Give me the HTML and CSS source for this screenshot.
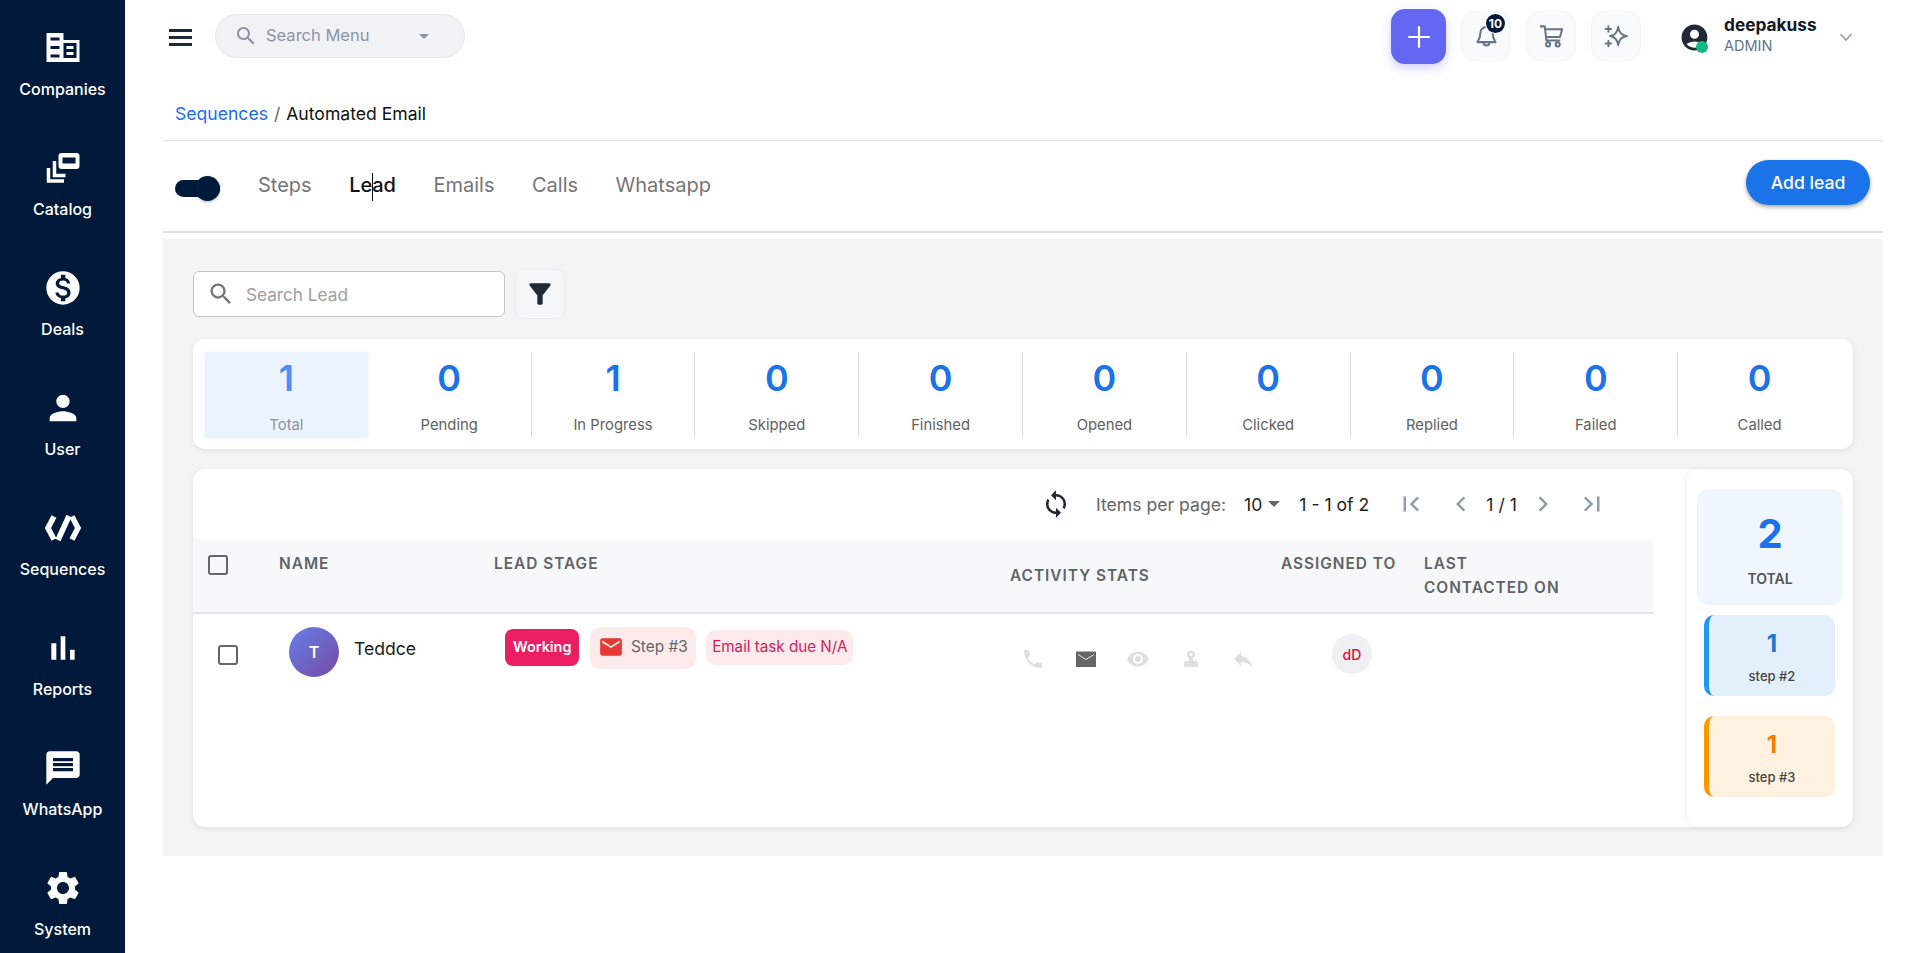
FILE: index.html
```html
<!DOCTYPE html>
<html lang="en">
<head>
    <meta charset="UTF-8">
    <meta name="viewport" content="width=device-width, initial-scale=1.0">
    <title>Automated Email</title>
    <link rel="stylesheet" href="styles.css">
</head>
<body>
    <!-- left menu -->
    <nav class="sidebar">
        <a class="side-item">
            <svg class="side-icon" viewBox="0 0 40 40"><path fill="#fff" d="M3.500 5h17v7h16v22h-33z"/><path fill="#01193a" d="M7.500 9.500h9v3h-9zM7.500 18h9v3h-9zM7.500 26.500h9v3h-9zM20.500 15h13v15h-13z"/><path fill="#fff" d="M23.500 18h7v3h-7zM23.500 24h7v3h-7z"/></svg>
            <span>Companies</span>
        </a>
        <a class="side-item">
            <svg class="side-icon" viewBox="0 0 40 40"><path fill="none" stroke="#fff" stroke-width="3.500" d="M5.500 20v13h15.500"/><path fill="none" stroke="#fff" stroke-width="3.500" d="M11.500 13v14.500h11"/><rect x="15.500" y="5" width="21" height="16" rx="3" fill="#fff"/><rect x="19.500" y="9.500" width="13" height="6" fill="#01193a"/></svg>
            <span>Catalog</span>
        </a>
        <a class="side-item">
            <svg class="side-icon" viewBox="0 0 24 24"><path fill="#fff" d="M12 2C6.480 2 2 6.480 2 12s4.480 10 10 10 10-4.480 10-10S17.520 2 12 2zm1.410 16.090V20h-2.670v-1.930c-1.710-.360-3.160-1.460-3.270-3.400h1.960c.100 1.050.820 1.870 2.650 1.870 1.960 0 2.400-.980 2.400-1.590 0-.830-.440-1.610-2.670-2.140-2.480-.600-4.180-1.620-4.180-3.670 0-1.720 1.390-2.840 3.110-3.210V4h2.670v1.950c1.860.450 2.790 1.860 2.850 3.390H14.300c-.050-1.110-.640-1.870-2.220-1.870-1.500 0-2.400.680-2.400 1.640 0 .840.650 1.390 2.670 1.910s4.180 1.390 4.180 3.910c-.010 1.830-1.380 2.830-3.120 3.160z"/></svg>
            <span>Deals</span>
        </a>
        <a class="side-item">
            <svg class="side-icon" viewBox="0 0 24 24"><path fill="#fff" d="M12 12c2.210 0 4-1.790 4-4s-1.790-4-4-4-4 1.790-4 4 1.790 4 4 4zm0 2c-2.670 0-8 1.340-8 4v2h16v-2c0-2.660-5.330-4-8-4z"/></svg>
            <span>User</span>
        </a>
        <a class="side-item">
            <svg class="side-icon" viewBox="0 0 40 40"><path fill="none" stroke="#fff" stroke-width="5.500" d="M11 8.500 5 20l6 11.500M29 8.500 35 20l-6 11.500M26 8 15 32"/></svg>
            <span>Sequences</span>
        </a>
        <a class="side-item">
            <svg class="side-icon" viewBox="0 0 24 24"><path fill="#fff" d="M5 9.200h3V19H5zM10.600 5h2.800v14h-2.800zm5.600 8H19v6h-2.800z"/></svg>
            <span>Reports</span>
        </a>
        <a class="side-item">
            <svg class="side-icon" viewBox="0 0 24 24"><path fill="#fff" d="M20 2H4c-1.100 0-1.990.900-1.990 2L2 22l4-4h14c1.100 0 2-.900 2-2V4c0-1.100-.900-2-2-2zm-2 12H6v-2h12v2zm0-3H6V9h12v2zm0-3H6V6h12v2z"/></svg>
            <span>WhatsApp</span>
        </a>
        <a class="side-item">
            <svg class="side-icon" viewBox="0 0 24 24"><path fill="#fff" d="M19.140 12.940c.040-.300.060-.610.060-.940 0-.320-.020-.640-.070-.940l2.030-1.580c.180-.140.230-.410.120-.610l-1.920-3.320c-.120-.220-.370-.290-.590-.220l-2.390.960c-.500-.380-1.030-.700-1.620-.940l-.360-2.540c-.040-.240-.240-.410-.480-.410h-3.840c-.240 0-.430.170-.470.410l-.360 2.540c-.590.240-1.130.570-1.620.940l-2.390-.960c-.220-.080-.470 0-.590.220L2.740 8.870c-.120.210-.080.470.120.610l2.030 1.580c-.050.300-.090.630-.090.940s.020.640.070.940l-2.030 1.580c-.180.140-.230.410-.12.610l1.920 3.320c.120.220.370.290.590.220l2.390-.960c.500.380 1.030.700 1.620.940l.360 2.540c.050.240.240.410.480.410h3.840c.240 0 .440-.170.470-.410l.360-2.540c.590-.240 1.130-.560 1.620-.940l2.390.960c.220.080.470 0 .590-.220l1.920-3.320c.120-.220.070-.470-.120-.610l-2.010-1.580zM12 15.600c-1.980 0-3.600-1.620-3.600-3.600s1.620-3.600 3.600-3.600 3.600 1.620 3.600 3.600-1.620 3.600-3.600 3.600z"/></svg>
            <span>System</span>
        </a>
    </nav>

    <main class="main">
        <!-- top bar -->
        <header class="topbar">
            <div class="menu-lines"><i></i><i></i><i></i></div>
            <div class="menu-search">
                <svg class="menu-search-icon" viewBox="0 0 24 24"><path fill="#8a94a6" d="M15.500 14h-.790l-.280-.270C15.410 12.590 16 11.110 16 9.500 16 5.910 13.090 3 9.500 3S3 5.910 3 9.500 5.910 16 9.500 16c1.610 0 3.090-.590 4.230-1.570l.270.280v.790l5 4.990L20.490 19l-4.990-5zm-6 0C7.010 14 5 11.990 5 9.500S7.010 5 9.500 5 14 7.010 14 9.500 11.990 14 9.500 14z"/></svg>
                <span class="menu-search-text">Search Menu</span>
                <span class="menu-search-caret"></span>
            </div>
            <div class="top-actions">
                <button class="plus-btn">
                    <svg width="26" height="26" viewBox="0 0 26 26"><path stroke="#fff" stroke-width="2.200" stroke-linecap="round" d="M13 3v20M3 13h20"/></svg>
                </button>
                <div class="top-icon">
                    <svg width="27" height="27" viewBox="0 0 24 24" class="line-icon"><path d="M6.500 9a5.500 5.500 0 0 1 11 0c0 5 2.500 7.500 2.500 8H4c0-.500 2.500-3 2.500-8"/><path d="M9.500 17.500a2.500 2.500 0 0 0 5 0"/></svg>
                    <span class="bell-badge">10</span>
                </div>
                <div class="top-icon">
                    <svg width="27" height="27" viewBox="0 0 24 24" class="line-icon"><path d="M2.500 3H6l1.500 12.500H19"/><path d="M6.300 5.500H21.500L19.500 12.500H7.200"/><circle cx="9" cy="19" r="1.800"/><circle cx="17.500" cy="19" r="1.800"/></svg>
                </div>
                <div class="top-icon">
                    <svg width="26" height="26" viewBox="0 0 24 24" class="line-icon"><path d="M14 3.500Q15 11 22 12 15 13 14 20.500 13 13 6.500 12 13 11 14 3.500z"/><path d="M5 3v5M2.500 5.500h5M5 16.500v5M2.500 19h5"/></svg>
                </div>
                <div class="user-box">
                    <div class="user-avatar">
                        <svg width="31" height="31" viewBox="0 0 24 24"><path fill="#1f2937" d="M12 2C6.480 2 2 6.480 2 12s4.480 10 10 10 10-4.480 10-10S17.520 2 12 2zm0 4c1.930 0 3.500 1.570 3.500 3.500S13.930 13 12 13s-3.500-1.570-3.500-3.500S10.070 6 12 6zm0 14c-2.030 0-4.430-.820-6.140-2.880C7.550 15.800 9.680 15 12 15s4.450.800 6.140 2.120C16.430 19.180 14.030 20 12 20z"/></svg>
                        <span class="user-dot"></span>
                    </div>
                    <div class="user-text">
                        <div class="user-name">deepakuss</div>
                        <div class="user-role">ADMIN</div>
                    </div>
                    <svg class="user-chevron" width="16" height="16" viewBox="0 0 16 16"><path fill="none" stroke="#94a3b8" stroke-width="1.800" d="M2.500 5l5.500 6 5.500-6"/></svg>
                </div>
            </div>
        </header>

        <div class="breadcrumb">
            <a class="crumb-link">Sequences</a>
            <span class="crumb-sep">/</span>
            <span>Automated Email</span>
        </div>

        <!-- tabs -->
        <div class="tabbar">
            <div class="toggle"><span class="toggle-knob"></span></div>
            <div class="tabs">
                <span class="tab">Steps</span>
                <span class="tab active">Le<span class="text-caret"></span>ad</span>
                <span class="tab">Emails</span>
                <span class="tab">Calls</span>
                <span class="tab">Whatsapp</span>
            </div>
            <button class="add-lead">Add lead</button>
        </div>

        <section class="panel">
            <div class="search-row">
                <div class="lead-search">
                    <svg width="28" height="28" viewBox="0 0 24 24"><path fill="#757575" d="M15.500 14h-.790l-.280-.270C15.410 12.590 16 11.110 16 9.500 16 5.910 13.090 3 9.500 3S3 5.910 3 9.500 5.910 16 9.500 16c1.610 0 3.090-.590 4.230-1.570l.270.280v.790l5 4.990L20.490 19l-4.990-5zm-6 0C7.010 14 5 11.990 5 9.500S7.010 5 9.500 5 14 7.010 14 9.500 11.990 14 9.500 14z"/></svg>
                    <span>Search Lead</span>
                </div>
                <button class="filter-btn">
                    <svg width="32" height="32" viewBox="0 0 24 24"><path fill="#1f2937" d="M4.250 5.610C6.270 8.200 10 13 10 13v6c0 .550.450 1 1 1h2c.550 0 1-.450 1-1v-6s3.720-4.800 5.740-7.390C20.250 4.950 19.780 4 18.950 4H5.040c-.830 0-1.300.950-.790 1.610z"/></svg>
                </button>
            </div>

            <div class="stats">
                <div class="stat selected"><b>1</b><span>Total</span></div>
                <div class="stat"><b>0</b><span>Pending</span></div>
                <div class="stat"><b>1</b><span>In Progress</span></div>
                <div class="stat"><b>0</b><span>Skipped</span></div>
                <div class="stat"><b>0</b><span>Finished</span></div>
                <div class="stat"><b>0</b><span>Opened</span></div>
                <div class="stat"><b>0</b><span>Clicked</span></div>
                <div class="stat"><b>0</b><span>Replied</span></div>
                <div class="stat"><b>0</b><span>Failed</span></div>
                <div class="stat"><b>0</b><span>Called</span></div>
            </div>

            <div class="table-card">
                <div class="table-side">
                    <div class="pager">
                        <svg class="pager-refresh" width="30" height="30" viewBox="0 0 24 24"><path fill="#1f2937" d="M12 4V1L8 5l4 4V6c3.310 0 6 2.690 6 6 0 1.010-.250 1.970-.700 2.800l1.460 1.460C19.540 15.030 20 13.570 20 12c0-4.420-3.580-8-8-8zm0 14c-3.310 0-6-2.690-6-6 0-1.010.250-1.970.700-2.800L5.240 7.740C4.460 8.970 4 10.430 4 12c0 4.420 3.580 8 8 8v3l4-4-4-4v3z"/></svg>
                        <span class="pager-label">Items per page:</span>
                        <span class="pager-size">10</span>
                        <span class="pager-caret"></span>
                        <span class="pager-range">1 - 1 of 2</span>
                        <svg class="pager-first" width="30" height="30" viewBox="0 0 24 24"><path d="M18.410 16.590L13.820 12l4.590-4.590L17 6l-6 6 6 6zM6 6h2v12H6z"/></svg>
                        <svg class="pager-prev" width="30" height="30" viewBox="0 0 24 24"><path d="M15.410 7.410L14 6l-6 6 6 6 1.410-1.410L10.830 12z"/></svg>
                        <span class="pager-page">1 / 1</span>
                        <svg class="pager-next" width="30" height="30" viewBox="0 0 24 24"><path d="M10 6L8.590 7.410 13.170 12l-4.580 4.590L10 18l6-6z"/></svg>
                        <svg class="pager-last" width="30" height="30" viewBox="0 0 24 24"><path d="M5.590 7.410L10.180 12l-4.590 4.590L7 18l6-6-6-6zM16 6h2v12h-2z"/></svg>
                    </div>

                    <div class="grid-row table-head">
                        <div><span class="check head-check"></span></div>
                        <div>NAME</div>
                        <div>LEAD STAGE</div>
                        <div class="head-mid">ACTIVITY STATS</div>
                        <div>ASSIGNED TO</div>
                        <div>LAST<br>CONTACTED ON</div>
                    </div>

                    <div class="grid-row table-row">
                        <div><span class="check row-check"></span></div>
                        <div class="lead-name">
                            <span class="lead-avatar">T</span>
                            <span class="lead-text">Teddce</span>
                        </div>
                        <div class="chips">
                            <span class="chip chip-stage">Working</span>
                            <span class="chip chip-step">
                                <svg width="26" height="26" viewBox="0 0 24 24"><path fill="#e53935" d="M20 4H4c-1.100 0-1.990.900-1.990 2L2 18c0 1.100.900 2 2 2h16c1.100 0 2-.900 2-2V6c0-1.100-.900-2-2-2zm0 4l-8 5-8-5V6l8 5 8-5v2z"/></svg>
                                Step #3
                            </span>
                            <span class="chip chip-due">Email task due N/A</span>
                        </div>
                        <div class="activity">
                            <svg width="24" height="24" viewBox="0 0 24 24"><path d="M6.620 10.790c1.440 2.830 3.760 5.140 6.590 6.590l2.200-2.200c.270-.270.670-.360 1.020-.240 1.120.370 2.330.570 3.570.570.550 0 1 .450 1 1V20c0 .550-.450 1-1 1-9.390 0-17-7.610-17-17 0-.550.450-1 1-1h3.500c.550 0 1 .450 1 1 0 1.250.200 2.450.570 3.570.110.350.030.740-.250 1.020l-2.200 2.200z"/></svg>
                            <svg class="sent" width="24" height="24" viewBox="0 0 24 24"><path d="M3 4.500h18a1 1 0 0 1 1 1V20H2V5.500a1 1 0 0 1 1-1z"/><path fill="none" stroke="#e8e8e8" stroke-width="1" d="M4 7.500l8 5 8-5"/></svg>
                            <svg width="24" height="24" viewBox="0 0 24 24"><path d="M12 4.500C7 4.500 2.730 7.610 1 12c1.730 4.390 6 7.500 11 7.500s9.270-3.110 11-7.500c-1.730-4.390-6-7.500-11-7.500zM12 17c-2.760 0-5-2.240-5-5s2.240-5 5-5 5 2.240 5 5-2.240 5-5 5zm0-8c-1.660 0-3 1.340-3 3s1.340 3 3 3 3-1.340 3-3-1.340-3-3-3z"/></svg>
                            <svg width="24" height="24" viewBox="0 0 24 24"><path fill-rule="evenodd" d="M12 3.500a4 4 0 0 1 2 7.500v3h3.500a1.500 1.500 0 0 1 1.500 1.500v4.500H5v-4.500A1.500 1.500 0 0 1 6.500 14H10v-3A4 4 0 0 1 12 3.500zm0 2.500a1.500 1.500 0 1 0 0 3 1.500 1.500 0 0 0 0-3z"/></svg>
                            <svg width="24" height="24" viewBox="0 0 24 24"><path d="M10 9V5l-7 7 7 7v-4.100c5 0 8.500 1.600 11 5.100-1-5-4-10-11-11z"/></svg>
                        </div>
                        <div class="assigned"><span class="assigned-badge">dD</span></div>
                        <div></div>
                    </div>
                </div>

                <aside class="side-summary">
                    <div class="total-box">
                        <b>2</b>
                        <span>TOTAL</span>
                    </div>
                    <div class="step-box step-blue">
                        <b>1</b>
                        <span>step #2</span>
                    </div>
                    <div class="step-box step-orange">
                        <b>1</b>
                        <span>step #3</span>
                    </div>
                </aside>
            </div>
        </section>
    </main>
</body>
</html>
```

FILE: styles.css
```css
* {
    padding: 0;
    margin: 0;
    box-sizing: border-box;
}

body {
    display: flex;
    height: 953px;
    overflow: hidden;
    background-color: #fff;
    font-family: Inter, "Noto Sans", sans-serif;
    color: #111;
}

/* sidebar */
.sidebar {
    width: 125px;
    flex-shrink: 0;
    background-color: #01193a;
}

.side-item {
    height: 120px;
    padding-top: 28px;
    display: flex;
    flex-direction: column;
    align-items: center;
    color: #fff;
    font-size: 16px;
    font-weight: 500;
    line-height: 20px;
}

.side-icon {
    width: 40px;
    height: 40px;
    margin-bottom: 11px;
}

/* main */
.main {
    width: 1720px;
    margin-left: 38px;
    flex-shrink: 0;
}

.topbar {
    height: 73px;
    display: flex;
    align-items: flex-start;
    padding-top: 9px;
}

.menu-lines {
    width: 23px;
    margin: 20px 0 0 6px;
    display: flex;
    flex-direction: column;
    gap: 4px;
}

.menu-lines i {
    height: 3px;
    background-color: #1f2937;
}

.menu-search {
    width: 250px;
    height: 44px;
    margin: 5px 0 0 23px;
    padding: 0 35px 0 18px;
    display: flex;
    align-items: center;
    background-color: #f1f2f6;
    border: 1px solid #e5e7eb;
    border-radius: 22px;
    font-size: 16.500px;
    color: #8a94a6;
}

.menu-search-icon {
    width: 24px;
    height: 24px;
    margin-right: 8px;
}

.menu-search-text {
    flex: 1;
    margin-top: -2px;
}

.menu-search-caret {
    border-left: 5.500px solid transparent;
    border-right: 5.500px solid transparent;
    border-top: 5.500px solid #8a94a6;
}

.top-actions {
    margin-left: auto;
    display: flex;
    align-items: flex-start;
}

.plus-btn {
    width: 55px;
    height: 55px;
    display: flex;
    align-items: center;
    justify-content: center;
    background-color: #6366f1;
    border: none;
    border-radius: 14px;
    box-shadow: 0 4px 10px rgba(99, 102, 241, 0.3);
    margin-right: 15px;
}

.top-icon {
    position: relative;
    width: 50px;
    height: 50px;
    margin: 2px 15px 0 0;
    display: flex;
    align-items: center;
    justify-content: center;
    background-color: #f8fafc;
    border: 1px solid #f1f5f9;
    border-radius: 14px;
}

.line-icon {
    fill: none;
    stroke: #64748b;
    stroke-width: 1.800;
    stroke-linecap: round;
    stroke-linejoin: round;
}

.bell-badge {
    position: absolute;
    top: 2px;
    right: 5px;
    width: 19px;
    height: 19px;
    border-radius: 50%;
    background-color: #01193a;
    box-shadow: 0 0 0 1px #fff;
    color: #fff;
    font-size: 12px;
    font-weight: 700;
    line-height: 19px;
    text-align: center;
}

.user-box {
    width: 227px;
    display: flex;
    align-items: flex-start;
    padding-left: 23px;
}

.user-avatar {
    position: relative;
    width: 31px;
    height: 31px;
    margin-top: 13px;
}

.user-dot {
    position: absolute;
    right: 2px;
    bottom: 0;
    width: 12px;
    height: 12px;
    border-radius: 50%;
    background-color: #10b981;
}

.user-text {
    margin: 4px 0 0 14px;
    width: 114px;
}

.user-name {
    font-size: 17.300px;
    font-weight: 700;
    line-height: 23px;
    color: #111827;
}

.user-role {
    font-size: 14.500px;
    line-height: 19px;
    color: #64748b;
}

.user-chevron {
    margin-top: 20px;
}

.breadcrumb {
    height: 68px;
    padding: 28px 0 0 12px;
    border-bottom: 1px solid #e0e0e0;
    font-size: 17.600px;
    line-height: 26px;
    color: #111;
}

.crumb-link {
    color: #1a6cf0;
}

.crumb-sep {
    margin: 0 1px;
    color: #666;
}

/* tabs */
.tabbar {
    height: 92px;
    padding: 0 13px 2px 12px;
    display: flex;
    align-items: center;
    border-bottom: 2px solid #e0e0e0;
    margin-bottom: 6px;
}

.toggle {
    position: relative;
    width: 45px;
    height: 17px;
    margin-top: 6px;
    background-color: #01193a;
    border-radius: 9px;
}

.toggle-knob {
    position: absolute;
    top: -4px;
    right: 0;
    width: 25px;
    height: 25px;
    border-radius: 50%;
    background-color: #01193a;
    box-shadow: 0 1px 3px rgba(0, 0, 0, 0.3);
}

.tabs {
    display: flex;
    gap: 37.500px;
    margin-left: 38px;
    flex: 1;
}

.tab {
    font-size: 20px;
    color: #757575;
}

.tab.active {
    position: relative;
    font-weight: 500;
    color: #111;
}

.text-caret {
    display: inline-block;
    width: 1px;
    height: 28px;
    margin: -4px -1px -4px 0;
    vertical-align: middle;
    background-color: #111;
}

.add-lead {
    width: 124px;
    height: 45px;
    margin-top: -6px;
    background-color: #1a73e8;
    border: none;
    border-radius: 23px;
    box-shadow: 0 2px 4px rgba(0, 0, 0, 0.35);
    color: #fff;
    font-family: inherit;
    font-size: 17.600px;
    font-weight: 500;
}

/* grey panel */
.panel {
    height: 617px;
    padding: 30px;
    background-color: #f4f4f4;
}

.search-row {
    display: flex;
    align-items: center;
    gap: 10px;
    height: 50px;
}

.lead-search {
    width: 312px;
    height: 46px;
    padding-left: 13px;
    display: flex;
    align-items: center;
    gap: 11px;
    background-color: #fff;
    border: 1px solid #c4c4c4;
    border-radius: 6px;
    font-size: 17.200px;
    color: #9e9e9e;
}

.filter-btn {
    width: 50px;
    height: 50px;
    display: flex;
    align-items: center;
    justify-content: center;
    background-color: #f4f6fa;
    border: 1px solid #e9edf3;
    border-radius: 8px;
}

.stats {
    height: 110px;
    margin-top: 20px;
    padding: 13px 12px 12px 12px;
    display: flex;
    background-color: #fff;
    border-radius: 12px;
    box-shadow: 0 2px 6px rgba(0, 0, 0, 0.08);
}

.stat {
    flex: 1;
    display: flex;
    flex-direction: column;
    align-items: center;
    border-right: 1px solid #dcdcdc;
}

.stat:last-child {
    border-right: none;
}

.stat b {
    height: 48px;
    margin-top: 2px;
    font-size: 36px;
    font-weight: 600;
    line-height: 48px;
    color: #1a73e8;
}

.stat span {
    margin-top: 13px;
    font-size: 14.800px;
    line-height: 20px;
    color: #616161;
}

.stat.selected {
    background-color: #ebf3fe;
    border-right: none;
    box-shadow: 0 1px 4px rgba(26, 115, 232, 0.1);
}

.stat.selected b {
    color: #4d8df5;
}

.stat.selected span {
    color: #8f929a;
}

/* table */
.table-card {
    height: 358px;
    margin-top: 20px;
    display: flex;
    background-color: #fff;
    border-radius: 12px;
    box-shadow: 0 2px 6px rgba(0, 0, 0, 0.08);
}

.table-side {
    width: 1460px;
    flex-shrink: 0;
}

.pager {
    height: 70px;
    display: flex;
    align-items: center;
    font-size: 17.600px;
    color: #222;
}

.pager-refresh {
    margin-left: 848px;
}

.pager-label {
    margin-left: 25px;
    color: #666;
}

.pager-size {
    margin-left: 18px;
}

.pager-caret {
    margin-left: 6px;
    border-left: 6px solid transparent;
    border-right: 6px solid transparent;
    border-top: 6px solid #666;
}

.pager-range {
    margin-left: 19px;
}

.pager-first,
.pager-prev,
.pager-next,
.pager-last {
    fill: #8d9cb3;
}

.pager-first {
    margin-left: 27px;
}

.pager-prev {
    margin-left: 20px;
}

.pager-page {
    margin-left: 10px;
}

.pager-next {
    margin-left: 11px;
}

.pager-last {
    margin-left: 19px;
}

.grid-row {
    display: grid;
    grid-template-columns: 86px 215px 516px 271px 143px 229px;
}

.table-head {
    height: 75px;
    padding-top: 13px;
    background-color: #f6f8fa;
    border-bottom: 2px solid #e2e4e8;
    font-size: 15.400px;
    font-weight: 600;
    letter-spacing: 1px;
    line-height: 24px;
    color: #5f6368;
    white-space: nowrap;
}

.head-mid {
    padding-top: 12px;
}

.check {
    display: block;
    width: 20px;
    height: 20px;
    border: 2px solid #666;
    border-radius: 3px;
}

.head-check {
    margin: 3px 0 0 15px;
}

.row-check {
    margin: 31px 0 0 25px;
}

.table-row {
    height: 100px;
}

.lead-name {
    display: flex;
    align-items: flex-start;
    padding: 13px 0 0 10px;
}

.lead-avatar {
    width: 50px;
    height: 50px;
    display: flex;
    align-items: center;
    justify-content: center;
    background: linear-gradient(135deg, #667eea, #764ba2);
    border-radius: 50%;
    color: #fff;
    font-size: 16px;
    font-weight: 600;
}

.lead-text {
    margin: 10px 0 0 15px;
    font-size: 17.600px;
    line-height: 24px;
    color: #1a1a1a;
}

.chips {
    display: flex;
    align-items: flex-start;
    padding: 13px 0 0 11px;
    gap: 10.500px;
}

.chip {
    display: flex;
    align-items: center;
    font-size: 14.400px;
    padding-bottom: 3px;
}

.chip-stage {
    height: 37px;
    margin-top: 2px;
    padding-left: 8px;
    padding-right: 8px;
    background-color: #ec1e63;
    border-radius: 8px;
    color: #fff;
    font-weight: 600;
}

.chip-step {
    height: 42px;
    padding-left: 8px;
    padding-right: 8px;
    gap: 7px;
    background-color: #fdeaea;
    border-radius: 10px;
    color: #666;
    font-size: 15.400px;
}

.chip-due {
    height: 35px;
    margin-top: 3px;
    padding-left: 6px;
    padding-right: 6px;
    background-color: #fdeaea;
    border-radius: 10px;
    color: #d81b60;
    font-size: 15.200px;
    white-space: nowrap;
}

.activity {
    display: flex;
    gap: 28.500px;
    padding: 33px 0 0 11px;
}

.activity svg {
    fill: #dfdfdf;
}

.activity svg.sent {
    fill: #666;
}

.assigned {
    padding: 20px 0 0 51px;
}

.assigned-badge {
    display: flex;
    align-items: center;
    justify-content: center;
    width: 40px;
    height: 40px;
    background-color: #eff0f3;
    border-radius: 50%;
    color: #e0103a;
    font-size: 14px;
    font-weight: 500;
}

/* right summary */
.side-summary {
    width: 166px;
    margin-left: 34px;
    padding: 20px 10px;
    border-radius: 12px;
    box-shadow: -2px 0 6px rgba(0, 0, 0, 0.05);
}

.total-box {
    height: 116px;
    display: flex;
    flex-direction: column;
    align-items: center;
    background-color: #eff6fe;
    border-radius: 12px;
}

.total-box b {
    margin-top: 21px;
    font-size: 40px;
    font-weight: 700;
    line-height: 48px;
    color: #1a73e8;
}

.total-box span {
    margin-top: 11px;
    font-size: 14px;
    font-weight: 600;
    line-height: 20px;
    color: #555;
}

.step-box {
    width: 131px;
    height: 81px;
    margin: 10px 0 20px 7px;
    display: flex;
    flex-direction: column;
    align-items: center;
    border-radius: 10px;
    border-left: 5px solid;
}

.step-box b {
    margin-top: 14px;
    font-size: 24px;
    font-weight: 700;
    line-height: 30px;
}

.step-box span {
    margin-top: 8px;
    font-size: 13px;
    font-weight: 500;
    line-height: 18px;
    color: #444;
}

.step-blue {
    background-color: #e3f0fc;
    border-color: #2196f3;
}

.step-blue b {
    color: #1976d2;
}

.step-orange {
    background-color: #fff1e0;
    border-color: #ff9800;
}

.step-orange b {
    color: #f57c00;
}
```
